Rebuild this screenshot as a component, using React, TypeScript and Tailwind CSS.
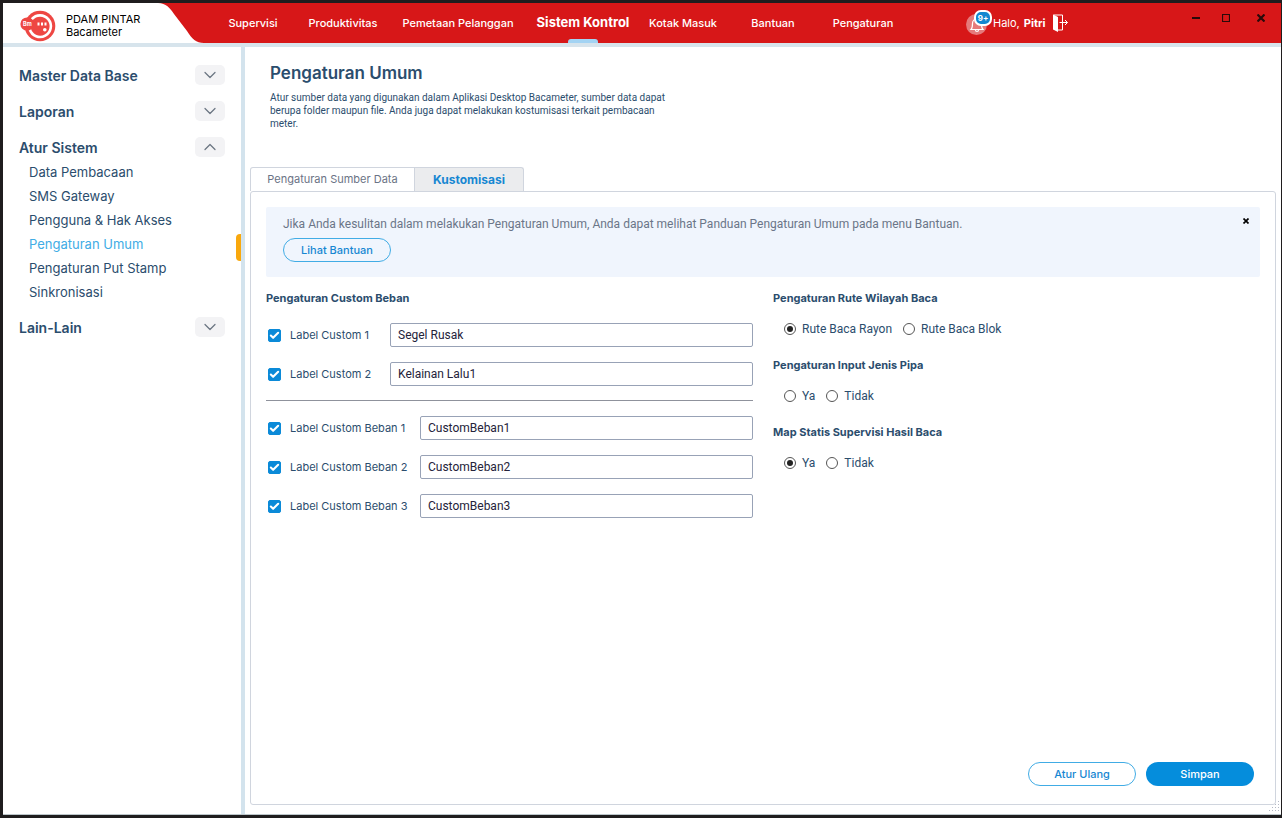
import React from "react";
import { Check, ChevronDown, ChevronUp } from "lucide-react";

const navItems = [
  { label: "Supervisi", width: "w-[90px]" },
  { label: "Produktivitas", width: "w-[90px]" },
  { label: "Pemetaan Pelanggan", width: "w-[140px]" },
  { label: "Sistem Kontrol", width: "w-[110px]", active: true },
  { label: "Kotak Masuk", width: "w-[90px]" },
  { label: "Bantuan", width: "w-[90px]" },
  { label: "Pengaturan", width: "w-[90px]" },
];

const sections = [
  { title: "Master Data Base", items: [] as string[] },
  { title: "Laporan", items: [] as string[] },
  {
    title: "Atur Sistem",
    items: [
      "Data Pembacaan",
      "SMS Gateway",
      "Pengguna & Hak Akses",
      "Pengaturan Umum",
      "Pengaturan Put Stamp",
      "Sinkronisasi",
    ],
  },
  { title: "Lain-Lain", items: [] as string[] },
];

function Logo() {
  return (
    <svg width="36" height="32" viewBox="0 0 36 32" aria-hidden="true">
      <circle cx="20" cy="16" r="15.3" fill="#ee4743" />
      <path d="M11.8 9.200 A10.8 10.8 0 1 1 9.800 19.500" fill="none" stroke="#fff" strokeWidth="2.6" />
      <circle cx="7" cy="14" r="6.6" fill="#ee4743" />
      <text x="3" y="16" fontSize="5.5" fontWeight="700" fill="#fff" fontFamily="Inter, sans-serif">Bm</text>
      <path d="M17.5 12.5h2v3h-2zM21 12.5h2v3h-2zM24.5 12.5h2v3h-2z" fill="#fff" />
      <circle cx="24.8" cy="19.8" r="1.8" fill="#fff" />
    </svg>
  );
}

function Header() {
  return (
    <header className="flex h-11 border-b-4 border-[#d7e4ec] bg-[#d71718]">
      <div className="flex w-[155px] items-center gap-[10px] bg-white pl-[17px] pt-1.5 text-[11px] leading-[13px] text-black">
        <Logo />
        <div className="whitespace-nowrap">
          PDAM PINTAR
          <br />
          Bacameter
        </div>
      </div>
      <svg width="46" height="40" viewBox="0 0 46 40" aria-hidden="true">
        <path d="M0 0C8 0 12 5 16 11L29 28C34 36 38 40 46 40H0Z" fill="#fff" />
      </svg>
      <nav className="ml-1 flex text-[11px] font-medium text-white">
        {navItems.map((n) => (
          <a
            key={n.label}
            href="#"
            className={`relative flex items-center justify-center whitespace-nowrap ${n.width} ${n.active ? "text-[13px] font-bold" : ""}`}
          >
            {n.label}
            {n.active && <span className="absolute bottom-0 h-1 w-[30px] rounded-t-[3px] bg-[#a3d3f3]" />}
          </a>
        ))}
      </nav>
      <div className="ml-[58px] flex items-center text-[11px] text-white">
        <button type="button" aria-label="Notifikasi" className="relative mt-0.5 flex size-[21px] items-center justify-center rounded-full bg-[#e57a7b]">
          <svg width="16" height="18" viewBox="0 0 16 18" fill="none" stroke="#fff" strokeWidth="1.2" aria-hidden="true">
            <path d="M2 14.5H14C12.5 13 12.5 11.5 12.5 8.5C12.5 5.5 10.5 4 8 4S3.500 5.500 3.500 8.500C3.500 11.500 3.500 13 2 14.500Z" />
            <path d="M6.500 15A1.500 1.500 0 0 0 9.500 15M8 4V2.500" />
          </svg>
          <span className="absolute -top-1 left-2 flex h-4 w-[18px] items-center justify-center rounded-[7px] border-2 border-white bg-[#1287d0] text-[8px] font-bold">
            9+
          </span>
        </button>
        <span className="ml-1.5">Halo,</span>
        <span className="ml-1 font-bold">Pitri</span>
        <button type="button" aria-label="Keluar" className="ml-2">
          <svg width="16" height="18" viewBox="0 0 16 18" aria-hidden="true">
            <path d="M0.500 1H9.500V16H5" fill="none" stroke="#fff" />
            <path d="M0 0.500L5 3V18L0 15.500Z" fill="#fff" />
            <path d="M6.500 8.500H14.500M12 6L14.500 8.500L12 11" fill="none" stroke="#fff" />
          </svg>
        </button>
      </div>
      <div className="ml-auto flex h-[30px] text-[#2a0a0a]">
        <button type="button" aria-label="Perkecil" className="flex w-[30px] items-center justify-center">
          <svg width="8" height="8" viewBox="0 0 8 8"><path d="M0 4H8" stroke="currentColor" strokeWidth="2" /></svg>
        </button>
        <button type="button" aria-label="Perbesar" className="flex w-[30px] items-center justify-center">
          <svg width="8" height="8" viewBox="0 0 8 8"><path d="M0.500 0.500H7.500V7.500H0.500Z" fill="none" stroke="currentColor" strokeWidth="1.200" /></svg>
        </button>
        <button type="button" aria-label="Tutup" className="flex w-10 items-center justify-center">
          <svg width="8" height="8" viewBox="0 0 8 8"><path d="M0.500 0.500L7.500 7.500M7.500 0.500L0.500 7.500" stroke="currentColor" strokeWidth="2.200" /></svg>
        </button>
      </div>
    </header>
  );
}

function Sidebar() {
  return (
    <aside className="flex w-[242px] shrink-0 flex-col gap-4 border-r-4 border-[#d3e3ed] pt-[18px] text-[#2b4d6d]">
      {sections.map((s) => {
        const open = s.items.length > 0;
        const Chevron = open ? ChevronUp : ChevronDown;
        return (
          <section key={s.title}>
            <div className="flex h-5 items-center justify-between pl-4 pr-4">
              <h2 className="text-[14px] font-semibold">{s.title}</h2>
              <button type="button" aria-label={s.title} aria-expanded={open} className="flex h-5 w-[30px] items-center justify-center rounded-[5px] bg-[#f3f3f5] text-[#6c7683]">
                <Chevron className="h-5 w-5" strokeWidth={1.5} />
              </button>
            </div>
            {open && (
              <ul className="-mb-[3px] pt-[3px] text-[13px] leading-6">
                {s.items.map((item) => (
                  <li key={item} className="relative h-6 pl-[26px]">
                    <a href="#" className={item === "Pengaturan Umum" ? "text-[#41ace5]" : ""}>{item}</a>
                    {item === "Pengaturan Umum" && <span className="absolute right-0 top-0.5 h-[27px] w-[5px] rounded-l-[4px] bg-[#f9a80d]" />}
                  </li>
                ))}
              </ul>
            )}
          </section>
        );
      })}
    </aside>
  );
}

function CustomField({ id, label, value, wide }: { id: string; label: string; value: string; wide?: boolean }) {
  return (
    <div className="flex h-6 items-center">
      <label className={`flex h-6 shrink-0 items-center whitespace-nowrap pl-0.5 text-[11px] ${wide ? "w-[154px]" : "w-[124px]"}`}>
        <span className="relative mr-[9px] size-[13px]">
          <input id={id} type="checkbox" defaultChecked className="peer block size-[13px] appearance-none rounded-[2px] border border-[#0b8ad8] checked:bg-[#0b8ad8]" />
          <Check className="pointer-events-none absolute left-px top-px hidden size-[11px] text-white peer-checked:block" strokeWidth={4.5} />
        </span>
        {label}
      </label>
      <input
        type="text"
        aria-label={label}
        defaultValue={value}
        className="h-6 w-full min-w-0 rounded-[2px] border border-[#98a2b6] px-[7px] font-['Roboto',sans-serif] text-[12px] text-[#25233a]"
      />
    </div>
  );
}

function RadioGroup({ name, legend, options, selected }: { name: string; legend: string; options: string[]; selected?: string }) {
  return (
    <fieldset>
      <legend className="text-[11px] font-bold leading-4">{legend}</legend>
      <div className="mt-[13px] flex h-5 items-center gap-[11px] pl-[11px] font-['Roboto',sans-serif] text-[12px]">
        {options.map((o) => (
          <label key={o} className="flex items-center gap-1.5">
            <input
              type="radio"
              name={name}
              defaultChecked={o === selected}
              className="grid size-3 appearance-none place-content-center rounded-full border border-[#555] before:size-1.5 before:rounded-full checked:before:bg-[#222]"
            />
            {o}
          </label>
        ))}
      </div>
    </fieldset>
  );
}

function Main() {
  return (
    <main className="flex min-w-0 flex-1 flex-col pb-[9px] pl-[5px] pr-[5px] pt-3.5 text-[#2b4d6d]">
      <h1 className="pl-5 text-[17px] font-semibold leading-6">Pengaturan Umum</h1>
      <p className="ml-5 mt-1.5 max-w-[400px] font-['Roboto',sans-serif] text-[10px] leading-[13px]">
        Atur sumber data yang digunakan dalam Aplikasi Desktop Bacameter, sumber data dapat berupa folder maupun file. Anda juga dapat melakukan kostumisasi terkait pembacaan meter.
      </p>
      <div role="tablist" className="mt-[37px] flex h-6">
        <button type="button" role="tab" aria-selected="false" className="w-[165px] rounded-tl-[3px] border border-b-0 border-[#d0d5de] text-[11px] text-[#6b7385]">
          Pengaturan Sumber Data
        </button>
        <button type="button" role="tab" aria-selected="true" className="w-[109px] rounded-tr-[3px] border border-b-0 border-l-0 border-[#d0d5de] bg-[#ebecee] text-[12px] font-bold text-[#1787d2]">
          Kustomisasi
        </button>
      </div>
      <section className="flex flex-1 flex-col rounded-[3px] border border-[#d0d5de] px-[15px] pb-[18px] pt-[15px]">
        <div className="flex h-[70px] items-start justify-between rounded-[2px] bg-[#f0f5fd] pl-[17px] pr-[7px] pt-[7px]">
          <div>
            <p className="font-['Roboto',sans-serif] text-[12px] leading-5 text-[#6b7588]">
              Jika Anda kesulitan dalam melakukan Pengaturan Umum, Anda dapat melihat Panduan Pengaturan Umum pada menu Bantuan.
            </p>
            <button type="button" className="mt-1 h-6 w-[108px] rounded-full border border-[#41ace5] text-[11px] font-medium text-[#1787d2]">
              Lihat Bantuan
            </button>
          </div>
          <button type="button" aria-label="Tutup panduan" className="flex size-[14px] items-center justify-center text-black">
            <svg width="6" height="6" viewBox="0 0 6 6"><path d="M0.500 0.500L5.500 5.500M5.500 0.500L0.500 5.500" stroke="currentColor" strokeWidth="1.700" /></svg>
          </button>
        </div>
        <div className="mt-[13px] grid grid-cols-[49%_1fr] gap-5">
          <div>
            <h3 className="text-[11px] font-bold leading-4">Pengaturan Custom Beban</h3>
            <div className="mt-[17px] flex flex-col gap-[15px]">
              <CustomField id="custom-1" label="Label Custom 1" value="Segel Rusak" />
              <CustomField id="custom-2" label="Label Custom 2" value="Kelainan Lalu1" />
            </div>
            <hr className="mb-[15px] mt-3.5 border-[#8f929c]" />
            <div className="flex flex-col gap-[15px]">
              <CustomField wide id="beban-1" label="Label Custom Beban 1" value="CustomBeban1" />
              <CustomField wide id="beban-2" label="Label Custom Beban 2" value="CustomBeban2" />
              <CustomField wide id="beban-3" label="Label Custom Beban 3" value="CustomBeban3" />
            </div>
          </div>
          <div className="flex flex-col gap-[18px]">
            <RadioGroup name="rute" legend="Pengaturan Rute Wilayah Baca" options={["Rute Baca Rayon", "Rute Baca Blok"]} selected="Rute Baca Rayon" />
            <RadioGroup name="pipa" legend="Pengaturan Input Jenis Pipa" options={["Ya", "Tidak"]} />
            <RadioGroup name="peta" legend="Map Statis Supervisi Hasil Baca" options={["Ya", "Tidak"]} selected="Ya" />
          </div>
        </div>
        <div className="mt-auto flex justify-end gap-2.5 pr-1.5 text-[11px] font-medium">
          <button type="reset" className="h-6 w-[108px] rounded-full border border-[#41ace5] text-[#1787d2]">Atur Ulang</button>
          <button type="submit" className="h-6 w-[108px] rounded-full bg-[#058ddc] text-white">Simpan</button>
        </div>
      </section>
    </main>
  );
}

export default function App() {
  return (
    <div className="relative flex min-h-screen flex-col border-y-[3px] border-l-[3px] border-r border-[#1f1d1e] bg-white font-['Inter',sans-serif]">
      <Header />
      <div className="flex flex-1 border-b border-[#bcc6ca]">
        <Sidebar />
        <Main />
      </div>
      <svg className="absolute bottom-0.5 right-0" width="12" height="12" viewBox="0 0 12 12" fill="#b4b8c4" aria-hidden="true">
        <path d="M9 0h1v1h-1zM6 3h1v1h-1zM9 3h1v1h-1zM3 6h1v1h-1zM6 6h1v1h-1zM9 6h1v1h-1zM0 9h1v1h-1zM3 9h1v1h-1zM6 9h1v1h-1zM9 9h1v1h-1z" />
      </svg>
    </div>
  );
}
